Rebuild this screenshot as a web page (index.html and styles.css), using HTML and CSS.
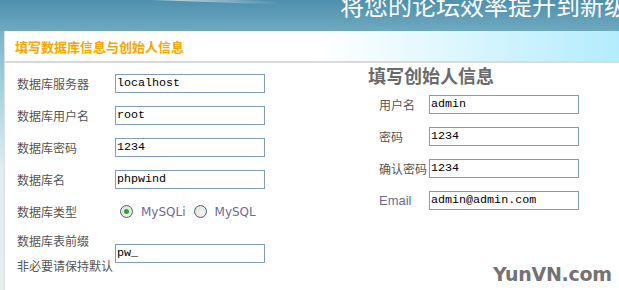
FILE: index.html
```html
<!DOCTYPE html>
<html lang="zh-CN">
<head>
<meta charset="utf-8">
<title>填写数据库信息与创始人信息</title>
<link rel="stylesheet" href="styles.css">
</head>
<body>
<div class="page">
  <header class="banner">
    <div class="slogan">将您的论坛效率提升到新级</div>
  </header>
  <section class="panel">
    <div class="panel-head">
      <h2 class="panel-title">填写数据库信息与创始人信息</h2>
    </div>
    <div class="panel-body">
      <div class="db-col">
        <div class="row"><span class="label">数据库服务器</span><input class="field" type="text" value="localhost"></div>
        <div class="row"><span class="label">数据库用户名</span><input class="field" type="text" value="root"></div>
        <div class="row"><span class="label">数据库密码</span><input class="field" type="text" value="1234"></div>
        <div class="row"><span class="label">数据库名</span><input class="field" type="text" value="phpwind"></div>
        <div class="row row-radio"><span class="label">数据库类型</span>
          <div class="radios">
            <span class="radio checked"></span><span class="radio-text">MySQLi</span>
            <span class="radio"></span><span class="radio-text">MySQL</span>
          </div>
        </div>
        <div class="row row-prefix"><span class="label label-two">数据库表前缀<br>非必要请保持默认</span><input class="field" type="text" value="pw_"></div>
      </div>
      <div class="admin-col">
        <h3 class="admin-title">填写创始人信息</h3>
        <div class="admin-rows">
          <div class="arow"><span class="alabel">用户名</span><input class="field" type="text" value="admin"></div>
          <div class="arow"><span class="alabel">密码</span><input class="field" type="text" value="1234"></div>
          <div class="arow"><span class="alabel">确认密码</span><input class="field" type="text" value="1234"></div>
          <div class="arow"><span class="alabel alabel-latin">Email</span><input class="field" type="text" value="admin@admin.com"></div>
        </div>
      </div>
    </div>
  </section>
  <div class="watermark">YunVN.com</div>
</div>
</body>
</html>
```

FILE: styles.css
```css
* { box-sizing: border-box; }
html, body { margin: 0; padding: 0; }
body {
  width: 619px;
  height: 290px;
  overflow: hidden;
  font-family: "Noto Sans CJK SC", "Liberation Sans", sans-serif;
  background: linear-gradient(180deg, #5a98b3 0, #7ab3c6 31px, #a9d2de 90px, #e3ecef 170px, #ececec 290px);
}
.page {
  position: relative;
  width: 619px;
  height: 290px;
}
.banner {
  position: relative;
  height: 31px;
  overflow: hidden;
  background: linear-gradient(180deg, #4f90ae 0, #6ea9bf 31px);
}
.banner::before {
  content: "";
  position: absolute;
  left: 80px;
  top: -2px;
  width: 200px;
  height: 3px;
  transform: rotate(2deg);
  background: linear-gradient(90deg, rgba(255,255,255,0), rgba(255,255,255,0.55) 50%, rgba(255,255,255,0));
}
.slogan {
  padding-left: 340px;
  margin-top: -7px;
  font-size: 24px;
  line-height: 24px;
  color: #fff;
  white-space: nowrap;
}
.panel {
  margin-left: 4px;
  height: 259px;
  background: #fff;
  border-left: 1px solid #d6dfe2;
}
.panel-head {
  height: 32px;
  display: flex;
  align-items: center;
  border-bottom: 2px solid #dadada;
  background: linear-gradient(90deg, #fff 0, #fff 313px, #b3ecfc 100%);
}
.panel-title {
  margin: 0;
  padding-left: 10px;
  font-size: 13px;
  font-weight: bold;
  color: #f7a800;
}
.panel-body {
  display: flex;
  padding-left: 12px;
  gap: 103px;
}
.db-col {
  width: 248px;
  padding-top: 4px;
}
.row {
  display: grid;
  grid-template-columns: 98px 150px;
  align-items: center;
  height: 32px;
}
.row-radio { height: 33px; }
.row-prefix { height: 50px; }
.label {
  font-size: 12px;
  color: #555;
  white-space: nowrap;
}
.label-two { line-height: 25px; }
.field {
  width: 150px;
  height: 19px;
  margin: 0;
  padding: 0 1px;
  border: 1px solid #7f9db9;
  font-family: "Liberation Mono", monospace;
  font-size: 11.7px;
  color: #000;
  background: #fff;
  outline: none;
}
.radios {
  display: flex;
  align-items: center;
  padding-left: 5px;
}
.radio {
  position: relative;
  width: 13px;
  height: 13px;
  border-radius: 50%;
  border: 1px solid #3d6384;
  background: radial-gradient(circle at 60% 60%, #f4f4f0 0, #dcdcd6 100%);
  margin-right: 8px;
}
.radio.checked::after {
  content: "";
  position: absolute;
  left: 3px;
  top: 3px;
  width: 5px;
  height: 5px;
  border-radius: 50%;
  background: #2aa52a;
}
.radio-text {
  font-family: "DejaVu Sans", Verdana, sans-serif;
  font-size: 12px;
  color: #6c6c94;
  margin-right: 8px;
}
.admin-col {
  padding-top: 1px;
}
.admin-title {
  margin: 0 0 2px;
  font-size: 18px;
  line-height: 22px;
  font-weight: 600;
  color: #6a6a6a;
}
.admin-rows {
  padding-left: 11px;
}
.arow {
  display: grid;
  grid-template-columns: 50px 150px;
  align-items: center;
  height: 32px;
}
.alabel {
  font-size: 12px;
  color: #555;
  white-space: nowrap;
}
.alabel-latin {
  font-family: "Liberation Sans", Arial, sans-serif;
  font-size: 13px;
  color: #6c6c8e;
}
.watermark {
  position: absolute;
  left: 493px;
  top: 262px;
  font-family: "DejaVu Sans", sans-serif;
  font-weight: bold;
  font-size: 19px;
  line-height: 24px;
  color: #737373;
  letter-spacing: -0.3px;
}
```
